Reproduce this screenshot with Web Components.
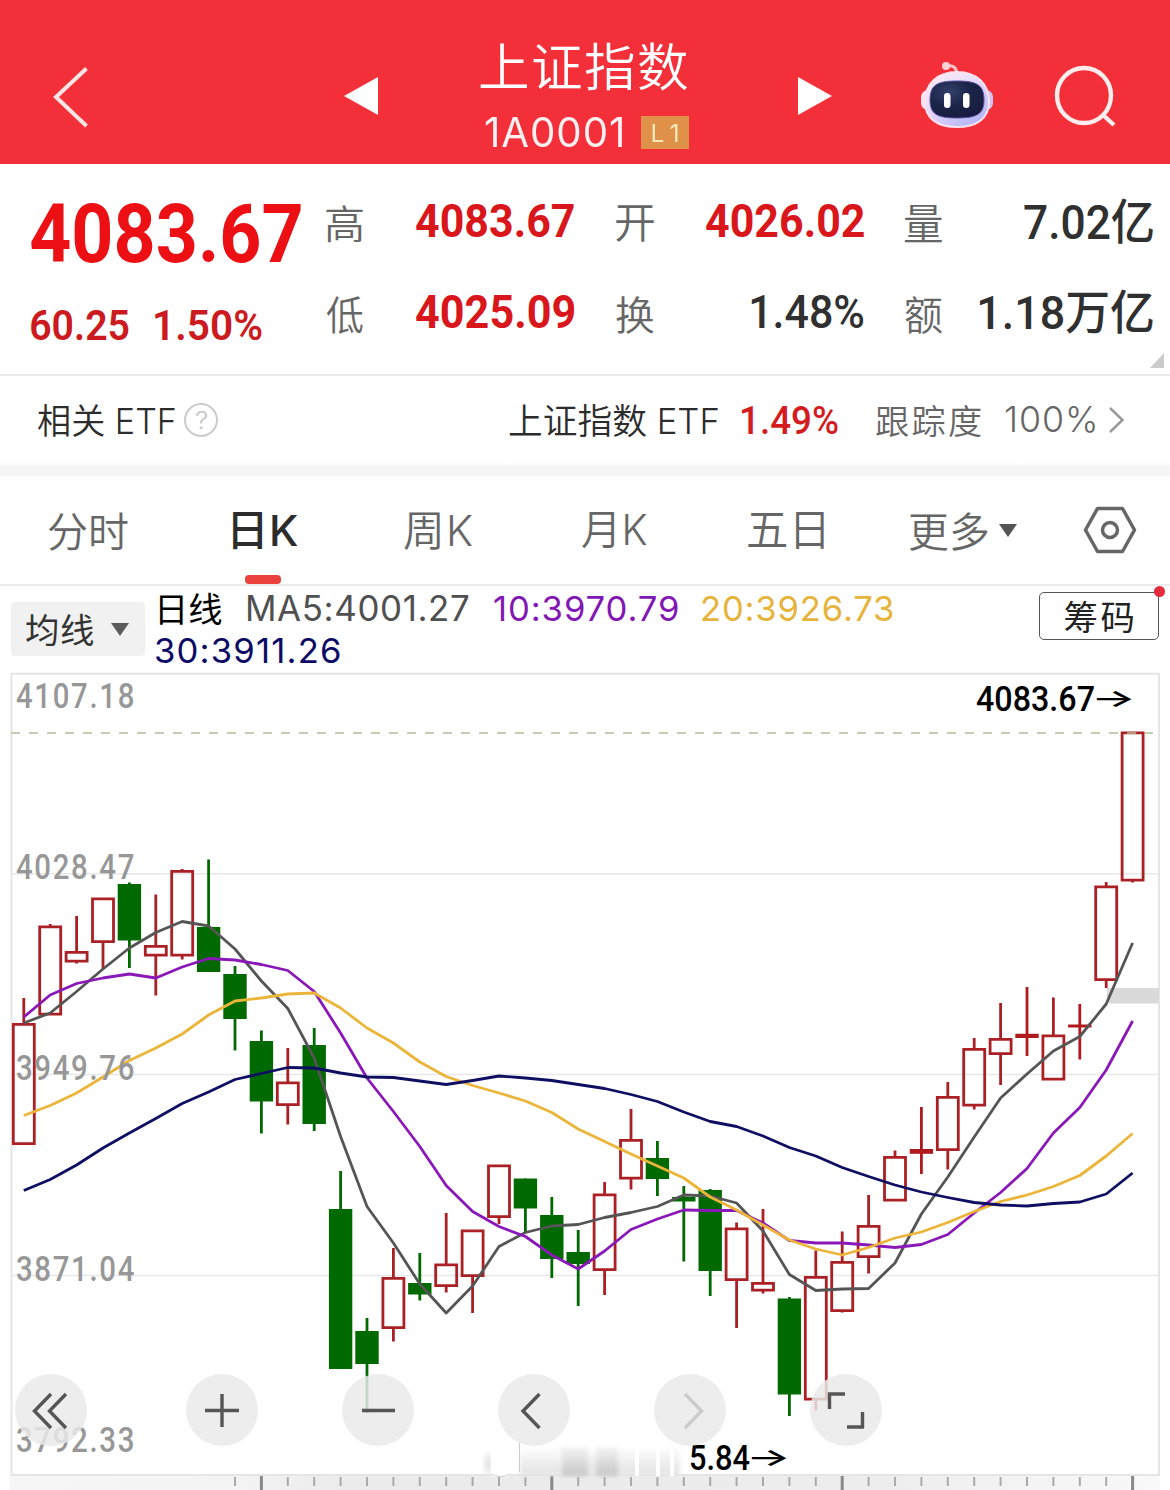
<!DOCTYPE html>
<html lang="zh-CN">
<head>
<meta charset="utf-8">
<title>上证指数 1A0001</title>
<style>
  html, body {
    margin: 0;
    background: #fff;
  }
  body {
    width: 1170px;
    height: 1490px;
    overflow: hidden;
    font-family: Inter, "Noto Sans CJK SC", sans-serif;
  }
</style>
</head>
<body>
<stock-page></stock-page>

<script>
const define = (name, html, setup) => {
  const template = document.createElement("template");
  template.innerHTML = html;
  customElements.define(name, class extends HTMLElement {
    constructor() {
      super();
      this.attachShadow({ mode: "open" });
      this.shadowRoot.appendChild(template.content.cloneNode(true));
    }
    connectedCallback() {
      if (setup) setup(this, this.shadowRoot);
    }
  });
};

// A line of text whose inked box is exactly w x h, so gaps are optical gaps.
// Too narrow a line is tracked out, too wide a line is condensed.
const ctx = document.createElement("canvas").getContext("2d");
define("fit-text", `
  <style>
    :host { display: block; flex: none; }
    span { display: block; width: max-content; white-space: pre; transform-origin: 0 0; }
  </style>
  <span><slot></slot></span>
`, (el, root) => {
  const w = +el.getAttribute("w");
  const h = +el.getAttribute("h");
  const css = getComputedStyle(el);
  const measure = (size) => {
    ctx.font = `${css.fontWeight} ${size}px ${css.fontFamily}`;
    return ctx.measureText(el.textContent);
  };
  const probe = measure(200);
  const size = 200 * h / (probe.actualBoundingBoxAscent + probe.actualBoundingBoxDescent);
  const m = measure(size);
  const ink = m.actualBoundingBoxLeft + m.actualBoundingBoxRight;
  const gaps = el.textContent.length - 1;
  const tracked = ink < w && gaps > 0;
  const scale = tracked ? 1 : w / ink;
  const baseline = h / 2 + (m.fontBoundingBoxAscent - m.fontBoundingBoxDescent) / 2;
  el.style.width = w + "px";
  el.style.height = h + "px";
  const span = root.querySelector("span");
  span.style.fontSize = size + "px";
  span.style.lineHeight = h + "px";
  if (tracked) span.style.letterSpacing = (w - ink) / gaps + "px";
  span.style.transform =
    `translate(${m.actualBoundingBoxLeft * scale}px, ${m.actualBoundingBoxAscent - baseline}px) scaleX(${scale})`;
});

define("app-header", `
  <style>
    :host {
      display: flex;
      align-items: flex-start;
      height: 164px;
      box-sizing: border-box;
      background: #f3303a;
      color: #fff;
    }
    svg { display: block; flex: none; }
    .back { margin: 66px 0 0 52px; }
    .prev { margin: 77px 0 0 254px; }
    .title { display: flex; flex-direction: column; margin: 42px 0 0 102px; width: 209px; font-weight: 350; }
    .code { display: flex; align-items: flex-start; margin-top: 26px; }
    .code fit-text { margin: 1px 0 0 5px; font-weight: 400; opacity: .93; }
    .level {
      display: flex;
      align-items: center;
      justify-content: center;
      width: 48px;
      height: 33px;
      margin-left: 19px;
      background: #df914a;
      color: #fdeec0;
    }
    .level fit-text { margin: 0; }
    .next { margin: 77px 0 0 109px; }
    .robot { margin: 60px 0 0 88px; }
    .search { margin: 65px 0 0 59px; }
  </style>
  <svg class="back" width="38" height="62" fill="none" stroke="#ffe4e4" stroke-width="4"><path d="M34.500 2.500L4 31L34.500 60"/></svg>
  <svg class="prev" width="34" height="38" fill="#fff"><path d="M34 0V38L0 19Z"/></svg>
  <div class="title">
    <fit-text w="208" h="48">上证指数</fit-text>
    <div class="code">
      <fit-text w="137" h="30">1A0001</fit-text>
      <div class="level"><fit-text w="25" h="18">L1</fit-text></div>
    </div>
  </div>
  <svg class="next" width="34" height="38" fill="#fff"><path d="M0 0V38L34 19Z"/></svg>
  <svg class="robot" width="74" height="70" viewBox="0 0 74 70">
    <defs>
      <linearGradient id="shell" x1="0" y1="0" x2=".7" y2="1">
        <stop offset="0" stop-color="#fff0f5"/><stop offset=".55" stop-color="#e3d8fa"/><stop offset="1" stop-color="#b5b5f5"/>
      </linearGradient>
      <radialGradient id="face" cx=".35" cy=".3" r=".8">
        <stop offset="0" stop-color="#33406b"/><stop offset=".5" stop-color="#1b2447"/><stop offset="1" stop-color="#171a3e"/>
      </radialGradient>
    </defs>
    <path d="M27 6Q36 4 37 14" fill="none" stroke="#ffc4cb" stroke-width="3"/>
    <circle cx="26" cy="6" r="4" fill="#ffd0d4"/>
    <rect x="1" y="30" width="14" height="20" rx="7" fill="#f9e3f0"/>
    <rect x="59" y="30" width="14" height="20" rx="7" fill="#cfc4f5"/>
    <path d="M37 12C57 12 69 24 69 42C69 59 56 67 37 67C18 67 5 59 5 42C5 24 17 12 37 12Z" fill="url(#shell)" stroke="#ffe0ec" stroke-width="2"/>
    <path d="M37 21C57 21 64 25 64 40C64 54 57 58 37 58C17 58 10 54 10 40C10 25 17 21 37 21Z" fill="url(#face)" stroke="#5751a5" stroke-width="1"/>
    <rect x="24" y="33" width="6.500" height="15" rx="3.200" fill="#fff"/>
    <rect x="43" y="33" width="6.500" height="15" rx="3.200" fill="#fff"/>
  </svg>
  <svg class="search" width="64" height="64" fill="none" stroke="#ffecec" stroke-width="4.400"><ellipse cx="31" cy="30.500" rx="27" ry="27.500"/><path d="M49.500 49.500L61 60"/></svg>
`);

define("quote-cell", `
  <style>
    :host { display: flex; align-items: flex-start; justify-content: space-between; height: 91px; color: #666; font-weight: 350; }
    ::slotted([slot=value]) { font: 700 16px Roboto, "Noto Sans CJK SC", sans-serif; }
    ::slotted(.up) { color: #d9161b; }
    ::slotted(.flat) { color: #303030; font-weight: 500; }
  </style>
  <slot></slot><slot name="value"></slot>
`);

define("quote-panel", `
  <style>
    :host {
      position: relative;
      display: flex;
      align-items: flex-start;
      height: 210px;
      box-sizing: border-box;
      padding: 39px 0 0 31px;
    }
    .last { width: 270px; font: 700 16px Roboto, sans-serif; color: #ec0f14; }
    .change { display: flex; gap: 26px; margin-top: 47px; color: #cb1a20; font-weight: 600; }
    .pair { width: 248px; margin-left: 25px; padding-top: 1px; }
    .b { margin-left: 42px; }
    .c { margin-left: 41px; }
    .dn { margin-top: 1px; }
    .wide { margin-top: -6px; }
    .corner { position: absolute; right: 6px; bottom: 6px; }
  </style>
  <div class="last">
    <fit-text w="270" h="60">4083.67</fit-text>
    <div class="change"><fit-text w="98" h="31">60.25</fit-text><fit-text w="107" h="31">1.50%</fit-text></div>
  </div>
  <div class="pair">
    <quote-cell><fit-text class="dn" w="37" h="37">高</fit-text><fit-text slot="value" class="up" w="158" h="34">4083.67</fit-text></quote-cell>
    <quote-cell><fit-text class="dn" w="37" h="37">低</fit-text><fit-text slot="value" class="up" w="158" h="34">4025.09</fit-text></quote-cell>
  </div>
  <div class="pair b">
    <quote-cell><fit-text class="dn" w="38" h="36">开</fit-text><fit-text slot="value" class="up" w="158" h="34">4026.02</fit-text></quote-cell>
    <quote-cell><fit-text class="dn" w="38" h="37">换</fit-text><fit-text slot="value" class="flat" w="113" h="34">1.48%</fit-text></quote-cell>
  </div>
  <div class="pair c">
    <quote-cell><fit-text class="dn" w="37" h="37">量</fit-text><fit-text slot="value" class="flat wide" w="129" h="44">7.02亿</fit-text></quote-cell>
    <quote-cell><fit-text class="dn" w="37" h="37">额</fit-text><fit-text slot="value" class="flat wide" w="174" h="44">1.18万亿</fit-text></quote-cell>
  </div>
  <svg class="corner" width="14" height="15" fill="#ccc"><path d="M14 0V15H0Z"/></svg>
`);

define("etf-row", `
  <style>
    :host {
      display: flex;
      align-items: center;
      height: 102px;
      box-sizing: border-box;
      padding: 0 46px 13px 38px;
      border-top: 2px solid #e9e9e9;
      background: linear-gradient(#fff 87px, #f5f5f5 90px);
      color: #2c2c2c;
      font-weight: 350;
    }
    .help {
      display: flex;
      align-items: center;
      justify-content: center;
      width: 30px;
      height: 30px;
      margin: 0 auto 0 9px;
      border: 2px solid #ccc;
      border-radius: 50%;
      color: #c4c4c4;
    }
    .rate { margin: 0 38px 0 24px; font: 500 16px Roboto, sans-serif; color: #d31b20; }
    .grey { color: #666; }
    .track { margin: 0 14px 0 24px; }
    svg { display: block; }
  </style>
  <fit-text w="137" h="33">相关 ETF</fit-text>
  <div class="help"><fit-text w="11" h="18">?</fit-text></div>
  <fit-text w="209" h="33">上证指数 ETF</fit-text>
  <fit-text class="rate" w="96" h="28">1.49%</fit-text>
  <fit-text class="grey" w="105" h="32">跟踪度</fit-text>
  <fit-text class="grey track" w="90" h="27">100%</fit-text>
  <svg width="15" height="26" fill="none" stroke="#999" stroke-width="2.500"><path d="M1 1L13.500 13L1 25"/></svg>
`);

define("period-tabs", `
  <style>
    :host {
      display: flex;
      align-items: flex-start;
      height: 110px;
      box-sizing: border-box;
      padding: 36px 35px 0 48px;
      border-bottom: 2px solid #ebebeb;
      color: #666;
      font-weight: 350;
    }
    .tab { display: flex; flex-direction: column; align-items: center; }
    .active { color: #2c2c2c; font-weight: 500; }
    .active i { width: 36px; height: 9px; margin: 26px 0 0 -6px; border-radius: 4px; background: #ea413c; }
    svg { display: block; flex: none; }
  </style>
  <fit-text w="80" h="38">分时</fit-text>
  <div class="tab active" style="margin-left:105px"><fit-text w="65" h="37">日K</fit-text><i></i></div>
  <fit-text style="margin-left:106px" w="68" h="37">周K</fit-text>
  <fit-text style="margin-left:110px" w="65" h="37">月K</fit-text>
  <fit-text style="margin-left:101px" w="76" h="37">五日</fit-text>
  <fit-text style="margin-left:85px" w="79" h="38">更多</fit-text>
  <svg style="margin:12px 0 0 11px" width="18" height="13" fill="#555"><path d="M0 0H18L9 13Z"/></svg>
  <svg style="margin:-8px 0 0 66px" width="54" height="50" fill="none" stroke="#666" stroke-width="3.500"><path d="M14.500 4.500H39.500L51.500 26L39.500 47.500H14.500L2.500 26Z" stroke-linejoin="round"/><circle cx="27" cy="26" r="7.500"/></svg>
`);

define("ma-bar", `
  <style>
    :host { display: flex; align-items: flex-start; height: 86px; box-sizing: border-box; padding: 6px 11px 0; color: #333; font-weight: 400; }
    .pick { display: flex; align-items: center; width: 134px; height: 54px; margin-top: 10px; padding-left: 15px; box-sizing: border-box; gap: 17px; border-radius: 4px; background: #f1f1f1; }
    .values { display: grid; grid-template-columns: repeat(4, max-content); margin: 0 auto 0 11px; row-gap: 13px; align-items: center; }
    .chips {
      position: relative;
      display: flex;
      align-items: center;
      justify-content: center;
      width: 120px;
      height: 48px;
      box-sizing: border-box;
      border: 1.500px solid #555;
      border-radius: 5px;
      color: #222;
    }
    .chips i { position: absolute; top: -7px; right: -7px; width: 11px; height: 11px; border-radius: 50%; background: #e62b3c; }
  </style>
  <div class="pick"><fit-text w="68" h="32">均线</fit-text><svg width="18" height="13" fill="#5c5c5c"><path d="M0 0H18L9 13Z"/></svg></div>
  <div class="values">
    <fit-text style="color:#000;margin-left:4px" w="62" h="32">日线</fit-text>
    <fit-text style="color:#505050;margin-left:26px" w="221" h="26">MA5:4001.27</fit-text>
    <fit-text style="color:#8217b4;margin-left:25px" w="184" h="26">10:3970.79</fit-text>
    <fit-text style="color:#e6b43c;margin-left:24px" w="191" h="26">20:3926.73</fit-text>
    <fit-text style="color:#0b0b66;grid-column:span 4" w="184" h="26">30:3911.26</fit-text>
  </div>
  <div class="chips"><fit-text w="69" h="32">筹码</fit-text><i></i></div>
`);

define("round-button", `
  <style>
    :host { display: block; width: 72px; height: 72px; border-radius: 50%; background: rgba(234, 234, 234, .84); color: #555; }
    :host([disabled]) { color: #ccc; }
    svg { display: block; fill: none; stroke: currentColor; stroke-width: 3.400; }
  </style>
  <svg width="72" height="72"><path/></svg>
`, (el, root) => root.querySelector("path").setAttribute("d", el.getAttribute("icon")));

// Candle: kind, high, body top, body bottom, low (canvas y). r hollow red, x flat red, g green.
const candles = [
  ["r", 998, 1023, 1145, 1145], ["r", 924, 925.5, 1015.5, 1015.5], ["r", 916, 951, 962.5, 963.5],
  ["r", 897.5, 897.5, 943, 969], ["g", 882.5, 884, 940.5, 968], ["r", 894.5, 945, 956.5, 995.5],
  ["r", 869, 870, 956.5, 959.5], ["g", 859.5, 927, 972, 972], ["g", 966, 974, 1019, 1050.5],
  ["g", 1030.5, 1041, 1101.5, 1133.5], ["r", 1048, 1081.5, 1106, 1124.5], ["g", 1028, 1045, 1124, 1131],
  ["g", 1171, 1209, 1369, 1369], ["g", 1318, 1331, 1364, 1413], ["r", 1248, 1277, 1329, 1341.5],
  ["g", 1253, 1283, 1294.5, 1300.5], ["r", 1213, 1263.5, 1287, 1292.5], ["r", 1229.5, 1229.5, 1277, 1313],
  ["r", 1164.5, 1164.5, 1218, 1224], ["g", 1178.5, 1178.5, 1208.5, 1232], ["g", 1197, 1215, 1259, 1278],
  ["g", 1230, 1252, 1264, 1306], ["r", 1182, 1193.5, 1271, 1295], ["r", 1109, 1139, 1179.5, 1189.5],
  ["g", 1141, 1158, 1179, 1196], ["g", 1186, 1197, 1201.5, 1261.5], ["g", 1189, 1190, 1271, 1296],
  ["r", 1222.5, 1227.5, 1281, 1328], ["r", 1209, 1282, 1291.5, 1293.5], ["g", 1297, 1298.5, 1394.5, 1416],
  ["r", 1250.5, 1276, 1400.5, 1410.5], ["r", 1231.5, 1261, 1312, 1312.5], ["r", 1195, 1225, 1258, 1273.5],
  ["r", 1150.5, 1156, 1201.5, 1201.5], ["x", 1107, 1149, 1153.8, 1174], ["r", 1082, 1096, 1151, 1169.5],
  ["r", 1038, 1048, 1106.5, 1109.5], ["r", 1003, 1038, 1055, 1085], ["x", 987, 1033.7, 1038, 1056],
  ["r", 997.5, 1034.500, 1080.5, 1080.5], ["x", 1004, 1024.5, 1027.5, 1059.5], ["r", 882, 885.5, 981, 988],
  ["r", 731.5, 731.5, 881.5, 882.5],
];

const averages = {
  "#555555": [1023, 1013, 991.5, 969, 948, 932.5, 921.5, 926, 949, 981, 1008.5, 1058, 1136.5, 1206.5, 1243, 1284, 1313, 1286, 1246.5, 1232.5, 1226, 1224.5, 1217.5, 1212.5, 1206.5, 1195, 1196, 1203, 1231, 1274.5, 1290.5, 1289, 1288.5, 1263, 1214, 1177, 1137, 1098, 1074, 1051, 1036.5, 1004, 943],
  "#8a18b8": [1017, 995, 983.5, 978, 974, 978, 967, 958.5, 960, 964.5, 970.5, 991.5, 1033, 1078, 1111.5, 1146.5, 1185.5, 1211.5, 1226.5, 1236.5, 1255, 1269, 1251, 1229.5, 1219, 1210, 1210.5, 1210.5, 1223, 1240.5, 1243, 1243, 1245, 1247.5, 1244.5, 1234.5, 1213, 1192.5, 1168.5, 1133, 1107.5, 1070, 1021],
  "#ebb53a": [1115.5, 1105.5, 1093, 1077, 1060.5, 1048, 1034, 1015, 1001, 998, 994, 993, 1008, 1028, 1043, 1062, 1076.5, 1085.5, 1093, 1101, 1112.5, 1129, 1141.5, 1154, 1166, 1178, 1197, 1210, 1225, 1240, 1249, 1255, 1247.5, 1238, 1232, 1222.5, 1211.5, 1201.5, 1195, 1186.5, 1175.5, 1156, 1133.5],
  "#0e0e62": [1190.5, 1179.5, 1165, 1148, 1133, 1118.5, 1103.5, 1092, 1079.5, 1073.5, 1067.5, 1068, 1073, 1077, 1077.5, 1081, 1084.5, 1080.5, 1076, 1078, 1080.5, 1084.5, 1088.5, 1094.5, 1101.5, 1112, 1121.5, 1126.5, 1136, 1147.5, 1156, 1167.5, 1176.5, 1185, 1192, 1197.5, 1202.5, 1205, 1206, 1203.5, 1202, 1194, 1173],
};

const cx = (i) => 23.8 + i * 26.4;

const drawCandle = ([kind, high, top, bottom, low], i) => {
  const x = cx(i);
  if (kind === "r") {
    return `<path d="M${x} ${high}V${top}M${x} ${bottom}V${low}M${x - 10.5} ${top + 1.4}h21V${bottom - 1.4}h-21Z" fill="none" stroke="#ab2024" stroke-width="2.800"/>`;
  }
  const color = kind === "g" ? "#006a00" : "#b01a1e";
  return `<path d="M${x} ${high}V${low}" stroke="${color}" stroke-width="2.800"/><path d="M${x - 11.7} ${top}h23.4V${bottom}h-23.4Z" fill="${color}"/>`;
};

const drawAverage = ([color, ys]) =>
  `<polyline points="${ys.map((y, i) => cx(i) + "," + y).join(" ")}" fill="none" stroke="${color}" stroke-width="2.800" stroke-linejoin="round"/>`;

const drawTick = (_, n) => {
  const i = n + 8;
  return i % 11 === 9
    ? `<path d="M${cx(i)} 1476V1490" stroke="#888" stroke-width="3"/>`
    : `<path d="M${cx(i)} 1477V1486" stroke="#aaa" stroke-width="2"/>`;
};

const drawPointer = (label, x, y, w) =>
  `<text y="${y}"><tspan x="${x}" textLength="${w}" lengthAdjust="spacingAndGlyphs">${label}</tspan><tspan class="arrow" x="${x + w - 4}" y="${y - 4}" textLength="45" lengthAdjust="spacingAndGlyphs">→</tspan></text>`;

const labels = [["4107.18", 708], ["4028.47", 879], ["3949.76", 1080], ["3871.04", 1281], ["3792.33", 1452]];

define("k-chart", `
  <style>
    :host { position: relative; display: block; height: 818px; }
    svg { display: block; }
    text { font-family: Roboto, sans-serif; font-weight: 500; font-size: 35px; }
    .axis { fill: #979797; letter-spacing: 2px; }
    .arrow { font-family: Inter, sans-serif; font-weight: 500; font-size: 25px; }
    .tools { position: absolute; left: 15px; top: 702px; display: flex; gap: 84px; }
    .tools :first-child { margin-right: 15px; }
  </style>
  <svg width="1170" height="818" viewBox="0 672 1170 818">
    <defs>
      <linearGradient id="strip"><stop offset="0" stop-color="#f6f6f6"/><stop offset=".2" stop-color="#f3f3f3"/><stop offset=".3" stop-color="#ebebeb"/><stop offset=".75" stop-color="#ededed"/><stop offset="1" stop-color="#f9f9f9"/></linearGradient>
      <linearGradient id="smudge" x1="0" y1="0" x2="0" y2="1"><stop offset="0" stop-color="#f4f4f4"/><stop offset="1" stop-color="#c6c6c6"/></linearGradient>
      <linearGradient id="haze" x1="0" y1="0" x2="0" y2="1"><stop offset="0" stop-color="#fdfdfd"/><stop offset="1" stop-color="#e2e2e2"/></linearGradient>
      <filter id="soft"><feGaussianBlur stdDeviation="2"/></filter>
    </defs>
    <rect x="10" y="1475" width="1150" height="15" fill="url(#strip)"/>
    <path d="M12 873.700H1159M12 1074.500H1159M12 1275.500H1159" stroke="#e8e8e8" stroke-width="1.600"/>
    <path d="M11.500 1475V673.800H1159V1475Z" fill="none" stroke="#e5e5e5" stroke-width="2"/>
    <rect x="1107" y="988" width="52" height="15.500" fill="#dadada"/>
    ${Array.from({ length: 35 }, drawTick).join("")}
    ${candles.map(drawCandle).join("")}
    <path d="M11 733H1153" stroke="#b4bb98" stroke-width="1.700" stroke-dasharray="9 9"/>
    ${Object.entries(averages).map(drawAverage).join("")}
    ${labels.map(([t, y]) => `<text class="axis" x="16" y="${y}" textLength="120" lengthAdjust="spacingAndGlyphs">${t}</text>`).join("")}
    ${drawPointer("4083.67", 976, 711, 119)}
    <g filter="url(#soft)">
      <rect x="520" y="1448" width="160" height="27" fill="url(#haze)"/>
      <rect x="562" y="1447" width="26" height="29" fill="url(#smudge)"/>
      <rect x="596" y="1447" width="22" height="29" fill="url(#smudge)"/>
      <ellipse cx="488" cy="1464" rx="4" ry="10" fill="#e6e6e6"/>
    </g>
    <rect x="491" y="1444" width="20" height="33" rx="4" fill="#fff"/>
    <path d="M491 1474Q500 1479 511 1474M519.500 1443V1472" fill="none" stroke="#ccc"/>
    <path d="M515 1443V1474M637 1446V1476M658 1446V1476M672 1446V1476" stroke="#fff" stroke-width="4"/>
    ${drawPointer("5.84", 689, 1470, 61)}
  </svg>
  <div class="tools">
    <round-button icon="M36 20L19.500 37L36 54M51 20L34.500 37L51 54"></round-button>
    <round-button icon="M19 36.500H53M36 20V53"></round-button>
    <round-button icon="M20 36.500H53"></round-button>
    <round-button icon="M41.500 20L25 37L41.500 54"></round-button>
    <round-button disabled icon="M31 20L47.500 37L31 54"></round-button>
    <round-button icon="M35 20H19.500V35M37 53H52.500V38"></round-button>
  </div>
`);

define("stock-page", `
  <style>
    :host { display: flex; flex-direction: column; width: 1170px; height: 1490px; overflow: hidden; }
    :host > * { flex: none; }
  </style>
  <app-header></app-header>
  <quote-panel></quote-panel>
  <etf-row></etf-row>
  <period-tabs></period-tabs>
  <ma-bar></ma-bar>
  <k-chart></k-chart>
`);
</script>
</body>
</html>
